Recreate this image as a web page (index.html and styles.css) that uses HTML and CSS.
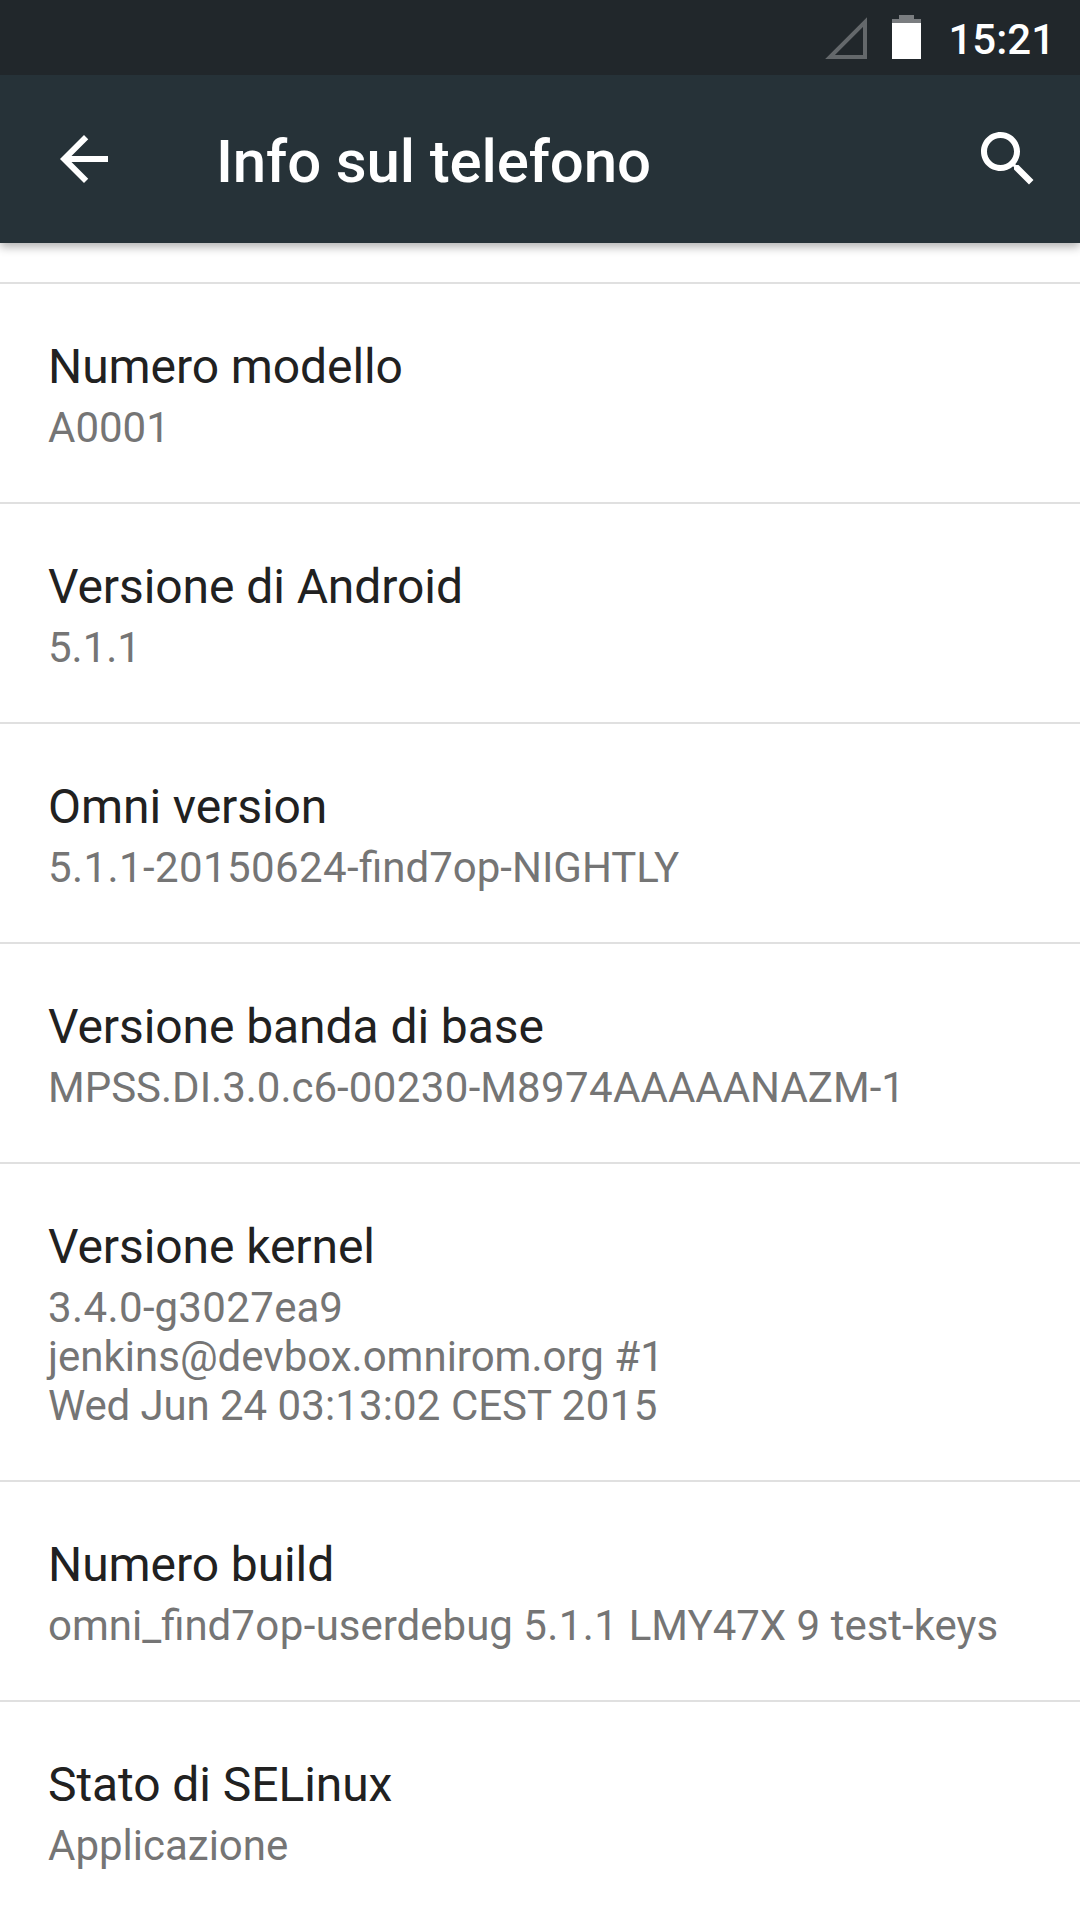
FILE: index.html
```html
<!DOCTYPE html>
<html lang="it">
<head>
  <meta charset="UTF-8">
  <meta name="viewport" content="width=device-width, initial-scale=1.0" />
  <title>Info sul telefono</title>
  <link rel="stylesheet" href="styles.css">
</head>

<body>
  <div class="status-bar">
    <svg class="signal" viewBox="0 0 42 42"><path d="M40 5V40H5Z" /></svg>
    <svg class="battery" viewBox="0 0 29 44"><path class="cap" d="M7 0h15v4h7v4H0V4h7z" /><path d="M0 8h29v36H0z" /></svg>
    <span class="clock">15:21</span>
  </div>

  <header class="toolbar">
    <svg class="icon back" viewBox="0 0 24 24"><path d="M20 11H7.83l5.59-5.59L12 4l-8 8 8 8 1.41-1.41L7.83 13H20v-2z" /></svg>
    <h1>Info sul telefono</h1>
    <svg class="icon search" viewBox="0 0 24 24"><path d="M15.5 14h-.79l-.28-.27C15.41 12.59 16 11.11 16 9.5 16 5.91 13.09 3 9.5 3S3 5.91 3 9.5 5.91 16 9.5 16c1.61 0 3.09-.59 4.23-1.57l.27.28v.79l5 4.99L20.49 19l-4.99-5zm-6 0C7.01 14 5 11.99 5 9.5S7.01 5 9.5 5 14 7.01 14 9.5 11.99 14 9.5 14z" /></svg>
  </header>

  <main class="list">
    <div class="item">
      <h2>Numero modello</h2>
      <p>A0001</p>
    </div>
    <div class="item">
      <h2>Versione di Android</h2>
      <p>5.1.1</p>
    </div>
    <div class="item">
      <h2>Omni version</h2>
      <p><span class="num">5.1.1-20150624-</span>find7op-NIGHTLY</p>
    </div>
    <div class="item">
      <h2>Versione banda di base</h2>
      <p>MPSS.DI.3.0.c6-<span class="num">00230</span>-M<span class="num">8974</span>AAAAANAZM-1</p>
    </div>
    <div class="item">
      <h2>Versione kernel</h2>
      <p><span class="num">3.4.0</span>-g<span class="num">3027</span>ea9<br>jenkins@devbox.omnirom.org #1<br><span class="day">Wed Jun</span> 24 <span class="time">03:13:02</span> CEST <span class="num">2015</span></p>
    </div>
    <div class="item">
      <h2>Numero build</h2>
      <p>omni_find<span class="num">7op-</span>userdebug <span class="num">5.1.1</span> LMY47X 9 test-keys</p>
    </div>
    <div class="item">
      <h2>Stato di SELinux</h2>
      <p>Applicazione</p>
    </div>
  </main>
</body>

</html>
```
FILE: styles.css
```css
* {
  box-sizing: border-box;
  padding: 0;
  margin: 0;
}

body {
  height: 1920px;
  overflow: hidden;
  background: #fff;
  font-family: Roboto, sans-serif;
}

.status-bar {
  position: relative;
  z-index: 1;
  display: flex;
  align-items: flex-start;
  justify-content: flex-end;
  height: 75px;
  padding: 15px 25px 0 0;
  background: #21272b;
  color: #fff;
}

.signal {
  width: 42px;
  height: 42px;
  margin: 2px 25px 0 0;
  fill: none;
  stroke: #64686b;
  stroke-width: 4;
}

.battery {
  width: 29px;
  height: 44px;
  margin-right: 27px;
  fill: #fff;
}

.battery .cap {
  fill: #7a7d80;
}

.clock {
  font-size: 42px;
  font-weight: 500;
  line-height: 49px;
}

.toolbar {
  position: relative;
  display: flex;
  align-items: center;
  height: 168px;
  padding: 0 36px 0 48px;
  background: #263238;
  box-shadow: 0 4px 9px rgba(0, 0, 0, .3);
  color: #fff;
}

.toolbar h1 {
  flex: 1;
  padding-top: 4px;
  margin-left: 96px;
  font-size: 60px;
  font-weight: 500;
  letter-spacing: -.14px;
}

.icon {
  width: 72px;
  height: 72px;
  fill: #fff;
}

.list {
  padding-top: 39px;
}

.item {
  padding: 55px 48px 50px;
  border-top: 2px solid #e0e0e0;
}

.item h2 {
  color: #212121;
  font-size: 48px;
  font-weight: 400;
  letter-spacing: -.08px;
  line-height: 56px;
}

.item p {
  padding-top: 8px;
  color: #757575;
  font-size: 42px;
  line-height: 49px;
}

.num {
  letter-spacing: .4px;
}

.day {
  letter-spacing: -.15px;
}

.time {
  letter-spacing: .12px;
}
```
